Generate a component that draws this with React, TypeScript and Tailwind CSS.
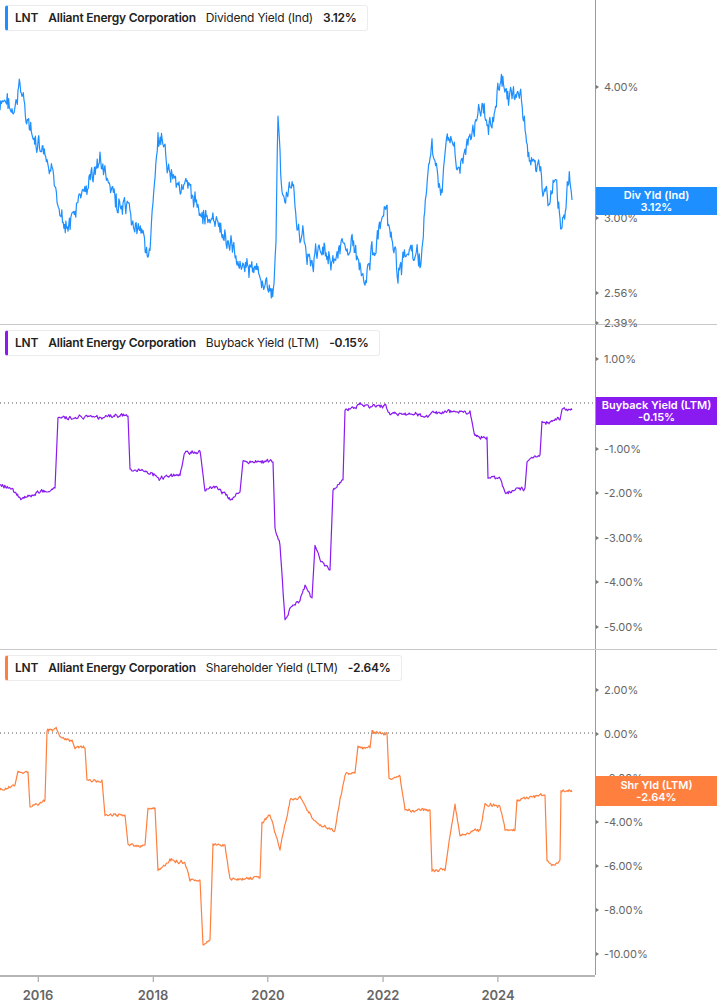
import React from "react";

type P = [number, number];
function rng(seed: number) {
  let s = seed;
  return () => {
    s = (s * 9301 + 49297) % 233280;
    return s / 233280;
  };
}
function build(pts: P[], noise: number, seed: number, step = 1.2, steps = false): string {
  const r = rng(seed);
  const out: string[] = [];
  let drift = 0;
  for (let i = 0; i < pts.length - 1; i++) {
    const [x0, y0] = pts[i];
    const [x1, y1] = pts[i + 1];
    const dx = x1 - x0;
    if (steps && dx < 4) {
      out.push(`${x0},${y0}`);
      continue;
    }
    const n = Math.max(1, Math.round(dx / step));
    for (let k = 0; k < n; k++) {
      const t = k / n;
      drift = drift * 0.6 + (r() - 0.5) * noise;
      const j = (r() - 0.5) * noise * 0.5;
      out.push(`${(x0 + dx * t).toFixed(1)},${(y0 + (y1 - y0) * t + drift + j).toFixed(1)}`);
    }
  }
  const l = pts[pts.length - 1];
  out.push(`${l[0]},${l[1]}`);
  return out.join(" ");
}

const div: P[] = [[0,110],[8,100],[14,120],[20,85],[26,110],[32,140],[45,160],[55,190],[68,230],[80,200],[100,160],[112,195],[130,220],[150,250],[158,140],[170,170],[190,195],[205,215],[220,230],[240,260],[258,275],[268,290],[274,295],[276,230],[278,110],[282,200],[290,185],[300,230],[312,265],[322,245],[335,260],[350,240],[365,275],[385,215],[398,270],[410,250],[420,265],[426,200],[432,140],[440,200],[448,130],[460,170],[470,140],[480,110],[492,120],[500,80],[512,100],[520,90],[528,150],[540,175],[548,200],[556,185],[562,230],[566,195],[570,180],[572,200]];
const buy: P[] = [[0,485],[12,488],[20,500],[40,492],[55,488],[58,418],[128,416],[130,470],[150,472],[160,478],[180,474],[185,452],[200,452],[205,490],[218,488],[230,500],[240,492],[243,460],[273,462],[275,530],[280,545],[285,620],[292,605],[300,600],[305,585],[312,598],[315,545],[320,560],[330,570],[333,490],[343,480],[345,410],[360,406],[385,406],[390,413],[425,415],[445,412],[470,412],[475,435],[487,437],[488,475],[500,480],[505,492],[525,488],[527,460],[540,455],[542,422],[560,420],[562,410],[572,410]];
const shr: P[] = [[0,790],[15,785],[18,772],[28,772],[30,808],[45,800],[47,730],[57,730],[60,738],[72,740],[75,747],[85,748],[87,780],[102,780],[105,815],[125,815],[128,845],[145,845],[148,808],[155,808],[158,870],[170,860],[185,862],[190,880],[200,880],[203,945],[210,940],[213,845],[225,845],[230,880],[260,878],[262,822],[270,815],[280,850],[290,800],[300,798],[315,822],[335,830],[340,800],[345,775],[355,773],[358,748],[370,748],[372,733],[387,733],[389,778],[400,778],[405,810],[430,810],[432,870],[445,870],[450,835],[455,805],[460,835],[480,830],[485,805],[500,805],[505,830],[515,830],[517,800],[545,795],[547,860],[555,865],[560,860],[561,790],[572,792]];

const font = { fontFamily: "Inter, 'Liberation Sans', sans-serif" };

function Header({ color, metric, value }: { color: string; metric: string; value: string }) {
  return (
    <div className="flex items-center gap-[10px] h-[26px] pl-[7px] pr-[10px] bg-white border border-[#ececec] rounded-[3px] relative text-[12px] tracking-[-0.2px] text-[#222]" style={{ borderLeft: `3px solid ${color}` }}>
      <span className="font-semibold">LNT</span>
      <span className="font-semibold">Alliant Energy Corporation</span>
      <span>{metric}</span>
      <span className="font-semibold">{value}</span>
    </div>
  );
}

function Panel({ top, color, metric, value, data, noise, ticks, tag, dotted, sep, step, steps }: {
  top: number; color: string; metric: string; value: string; data: P[]; noise: number; ticks: [string, number][]; tag: { l1: string; l2: string; y: number; h: number }; dotted?: number; sep: boolean; step: number; steps: boolean;
}) {
  const pts = React.useMemo(() => build(data.map(([x, y]) => [x, y - top] as P), noise, top + 7, step, steps), [top]);
  return (
    <div className={`flex h-[325px] ${sep ? "border-b border-[#c8c8c8]" : ""}`}>
      <div className="relative w-[595px]">
        <svg className="absolute inset-0" width="595" height="325">
          {dotted !== undefined && <line x1="0" x2="595" y1={dotted - top} y2={dotted - top} stroke="#555" strokeWidth="1" strokeDasharray="1 3" />}
          <polyline points={pts} fill="none" stroke={color} strokeWidth="1.2" strokeLinejoin="round" />
        </svg>
        <div className="absolute left-[5px] top-[5px]"><Header color={color} metric={metric} value={value} /></div>
      </div>
      <div className="relative flex-1 border-l border-[#9a9a9a] text-[11px] text-[#666]">
        {ticks.map(([t, y]) => (
          <div key={t} className="absolute left-0 flex items-center gap-[5px]" style={{ top: y - top - 7 }}>
            <span className="w-0 h-0 border-y-[2px] border-y-transparent border-l-[3px] border-l-[#777]" />
            <span>{t}</span>
          </div>
        ))}
        <div className="absolute left-0 right-0 flex flex-col items-center justify-center text-white font-semibold text-[11px] leading-[12px]" style={{ top: tag.y - top, height: tag.h, background: color }}>
          <span>{tag.l1}</span><span>{tag.l2}</span>
        </div>
      </div>
    </div>
  );
}

export default function App() {
  return (
    <div className="w-[717px] h-[1005px] bg-white overflow-hidden" style={font}>
      <Panel top={0} sep color="#1e8fff" metric="Dividend Yield (Ind)" value="3.12%" data={div} noise={16} step={0.7} steps={false}
        ticks={[["4.00%", 86], ["3.00%", 217], ["2.56%", 292], ["2.39%", 322]]} tag={{ l1: "Div Yld (Ind)", l2: "3.12%", y: 187, h: 28 }} />
      <Panel top={325} sep color="#8a1bf0" metric="Buyback Yield (LTM)" value="-0.15%" data={buy} noise={3} step={0.8} steps dotted={403}
        ticks={[["1.00%", 358], ["-1.00%", 448], ["-2.00%", 492], ["-3.00%", 537], ["-4.00%", 581], ["-5.00%", 626]]} tag={{ l1: "Buyback Yield (LTM)", l2: "-0.15%", y: 397, h: 28 }} />
      <Panel top={650} sep={false} color="#ff7f3e" metric="Shareholder Yield (LTM)" value="-2.64%" data={shr} noise={2.5} step={0.8} steps dotted={733}
        ticks={[["2.00%", 689], ["0.00%", 733], ["-2.00%", 777], ["-4.00%", 821], ["-6.00%", 865], ["-8.00%", 909], ["-10.00%", 953]]} tag={{ l1: "Shr Yld (LTM)", l2: "-2.64%", y: 776, h: 30 }} />
      <div className="flex">
        <div className="relative w-[595px] h-[30px] border-t-2 border-[#b5b5b5] text-[13px] font-semibold text-[#666]">
          {[["2016", 38], ["2018", 153], ["2020", 268], ["2022", 383], ["2024", 498]].map(([t, x]) => (
            <div key={t} className="absolute top-0 flex flex-col items-center -translate-x-1/2" style={{ left: Number(x) }}>
              <span className="w-px h-[5px] bg-[#999]" />
              <span className="mt-[4px]">{t}</span>
            </div>
          ))}
        </div>
        <div className="flex-1 border-l border-[#9a9a9a] h-0" />
      </div>
    </div>
  );
}
